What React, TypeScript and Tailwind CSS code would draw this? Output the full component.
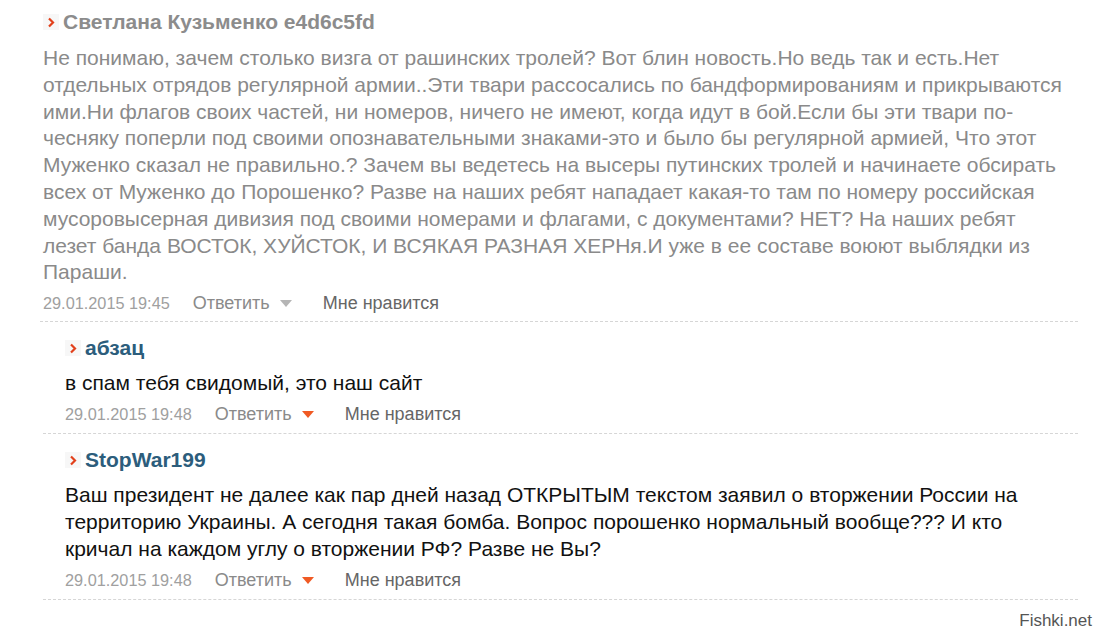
import React from "react";

const Chevron = () => (
  <span className="inline-flex items-center justify-center w-[16px] h-[16px] bg-[#f7f7f7] mr-[4px]">
    <svg width="8" height="11" viewBox="0 0 8 11">
      <path d="M2 1.5 L6 5.5 L2 9.5" fill="none" stroke="#e2401b" strokeWidth="2.2" />
    </svg>
  </span>
);

const Caret = ({ color }: { color: string }) => (
  <svg width="12" height="7" viewBox="0 0 12 7" className="ml-[10px]">
    <path d="M0 0 L12 0 L6 7 Z" fill={color} />
  </svg>
);

type Props = {
  name: string;
  lines: string[];
  date: string;
  faded?: boolean;
  indent?: boolean;
};

const Comment = ({ name, lines, date, faded, indent }: Props) => (
  <div className={indent ? "ml-[22px]" : ""}>
    <div className="flex items-center h-[39px] pt-[13px]">
      <Chevron />
      <span
        className={
          "font-bold text-[21px] leading-[26px] " +
          (faded ? "text-[#8c8c8c]" : "text-[#2c5d7c]")
        }
      >
        {name}
      </span>
    </div>
    <div
      className={
        "text-[21px] " +
        (faded ? "mt-[10px] text-[#8a8a8a] leading-[26.8px]" : "mt-[8px] text-[#111] leading-[27px]")
      }
    >
      {lines.map((l, i) => (
        <div key={i} className="whitespace-nowrap">
          {l}
        </div>
      ))}
    </div>
    <div className={"flex items-center h-[20px] " + (faded ? "mt-[7px]" : "mt-[8px]")}>
      <span className="text-[#a0a0a0] text-[16.3px]">{date}</span>
      <span className="ml-[23px] text-[#8a8a8a] text-[18px] flex items-center">
        Ответить
        <Caret color={faded ? "#b5b5b5" : "#f05a24"} />
      </span>
      <span className="ml-[31px] text-[#666] text-[18px]">Мне нравится</span>
    </div>
    <div
      className={"border-t border-dashed border-[#d6d6d6] mr-[28px] " + (faded ? "mt-[8px]" : "mt-[9px]")}
      style={{ marginLeft: indent ? -22 : -3 }}
    />
  </div>
);

export default function App() {
  return (
    <div
      className="w-[1106px] h-[634px] bg-white overflow-hidden relative pl-[43px]"
      style={{ fontFamily: '"Liberation Sans", Arial, sans-serif' }}
    >
      <div className="-mt-[4px]">
        <Comment
          faded
          name="Светлана Кузьменко e4d6c5fd"
          date="29.01.2015 19:45"
          lines={[
            "Не понимаю, зачем столько визга от рашинских тролей? Вот блин новость.Но ведь так и есть.Нет",
            "отдельных отрядов регулярной армии..Эти твари рассосались по бандформированиям и прикрываются",
            "ими.Ни флагов своих частей, ни номеров, ничего не имеют, когда идут в бой.Если бы эти твари по-",
            "чесняку поперли под своими опознавательными знаками-это и было бы регулярной армией, Что этот",
            "Муженко сказал не правильно.? Зачем вы ведетесь на высеры путинских тролей и начинаете обсирать",
            "всех от Муженко до Порошенко? Разве на наших ребят нападает какая-то там по номеру российская",
            "мусоровысерная дивизия под своими номерами и флагами, с документами? НЕТ? На наших ребят",
            "лезет банда ВОСТОК, ХУЙСТОК, И ВСЯКАЯ РАЗНАЯ ХЕРНя.И уже в ее составе воюют выблядки из",
            "Параши.",
          ]}
        />
        <Comment
          indent
          name="абзац"
          date="29.01.2015 19:48"
          lines={["в спам тебя свидомый, это наш сайт"]}
        />
        <Comment
          indent
          name="StopWar199"
          date="29.01.2015 19:48"
          lines={[
            "Ваш президент не далее как пар дней назад ОТКРЫТЫМ текстом заявил о вторжении России на",
            "территорию Украины. А сегодня такая бомба. Вопрос порошенко нормальный вообще??? И кто",
            "кричал на каждом углу о вторжении РФ? Разве не Вы?",
          ]}
        />
      </div>
      <div className="absolute right-[14px] bottom-[1px] text-[17px] text-[#555]">Fishki.net</div>
    </div>
  );
}
